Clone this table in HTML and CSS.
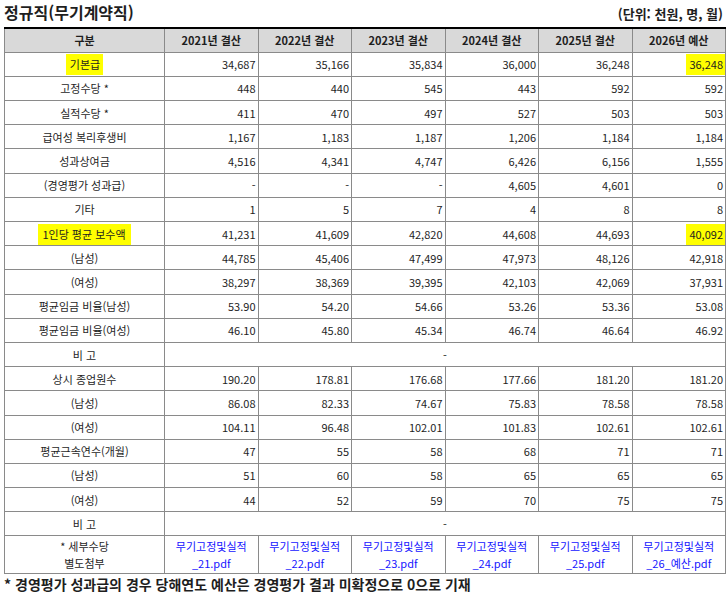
FILE: index.html
```html
<!DOCTYPE html>
<html lang="ko">
<head>
<meta charset="utf-8">
<title>정규직(무기계약직)</title>
<link rel="stylesheet" href="styles.css">
</head>
<body>
<div class="page">
  <div class="top">
    <h1 class="title">정규직(무기계약직)</h1>
    <div class="unit">(단위: 천원, 명, 월)</div>
  </div>
  <table class="grid">
    <colgroup>
      <col class="c-label">
      <col class="c-year"><col class="c-year"><col class="c-year">
      <col class="c-year"><col class="c-year"><col class="c-year">
    </colgroup>
    <thead>
      <tr>
        <th>구분</th>
        <th>2021년 결산</th>
        <th>2022년 결산</th>
        <th>2023년 결산</th>
        <th>2024년 결산</th>
        <th>2025년 결산</th>
        <th>2026년 예산</th>
      </tr>
    </thead>
    <tbody>
      <tr><td class="lb"><span class="hl hl-a">기본급</span></td><td>34,687</td><td>35,166</td><td>35,834</td><td>36,000</td><td>36,248</td><td><span class="hl hl-n">36,248</span></td></tr>
      <tr><td class="lb">고정수당 *</td><td>448</td><td>440</td><td>545</td><td>443</td><td>592</td><td>592</td></tr>
      <tr><td class="lb">실적수당 *</td><td>411</td><td>470</td><td>497</td><td>527</td><td>503</td><td>503</td></tr>
      <tr><td class="lb">급여성 복리후생비</td><td>1,167</td><td>1,183</td><td>1,187</td><td>1,206</td><td>1,184</td><td>1,184</td></tr>
      <tr><td class="lb">성과상여금</td><td>4,516</td><td>4,341</td><td>4,747</td><td>6,426</td><td>6,156</td><td>1,555</td></tr>
      <tr><td class="lb">(경영평가 성과급)</td><td>-</td><td>-</td><td>-</td><td>4,605</td><td>4,601</td><td>0</td></tr>
      <tr><td class="lb">기타</td><td>1</td><td>5</td><td>7</td><td>4</td><td>8</td><td>8</td></tr>
      <tr><td class="lb"><span class="hl hl-b">1인당 평균 보수액</span></td><td>41,231</td><td>41,609</td><td>42,820</td><td>44,608</td><td>44,693</td><td><span class="hl hl-n">40,092</span></td></tr>
      <tr><td class="lb">(남성)</td><td>44,785</td><td>45,406</td><td>47,499</td><td>47,973</td><td>48,126</td><td>42,918</td></tr>
      <tr><td class="lb">(여성)</td><td>38,297</td><td>38,369</td><td>39,395</td><td>42,103</td><td>42,069</td><td>37,931</td></tr>
      <tr><td class="lb">평균임금 비율(남성)</td><td>53.90</td><td>54.20</td><td>54.66</td><td>53.26</td><td>53.36</td><td>53.08</td></tr>
      <tr><td class="lb">평균임금 비율(여성)</td><td>46.10</td><td>45.80</td><td>45.34</td><td>46.74</td><td>46.64</td><td>46.92</td></tr>
      <tr><td class="lb">비 고</td><td class="merged" colspan="6">-</td></tr>
      <tr><td class="lb">상시 종업원수</td><td>190.20</td><td>178.81</td><td>176.68</td><td>177.66</td><td>181.20</td><td>181.20</td></tr>
      <tr><td class="lb">(남성)</td><td>86.08</td><td>82.33</td><td>74.67</td><td>75.83</td><td>78.58</td><td>78.58</td></tr>
      <tr><td class="lb">(여성)</td><td>104.11</td><td>96.48</td><td>102.01</td><td>101.83</td><td>102.61</td><td>102.61</td></tr>
      <tr><td class="lb">평균근속연수(개월)</td><td>47</td><td>55</td><td>58</td><td>68</td><td>71</td><td>71</td></tr>
      <tr><td class="lb">(남성)</td><td>51</td><td>60</td><td>58</td><td>65</td><td>65</td><td>65</td></tr>
      <tr><td class="lb">(여성)</td><td>44</td><td>52</td><td>59</td><td>70</td><td>75</td><td>75</td></tr>
      <tr><td class="lb">비 고</td><td class="merged" colspan="6">-</td></tr>
      <tr class="files">
        <td class="lb">* 세부수당<br>별도첨부</td>
        <td class="file"><a href="#">무기고정및실적<br>_21.pdf</a></td>
        <td class="file"><a href="#">무기고정및실적<br>_22.pdf</a></td>
        <td class="file"><a href="#">무기고정및실적<br>_23.pdf</a></td>
        <td class="file"><a href="#">무기고정및실적<br>_24.pdf</a></td>
        <td class="file"><a href="#">무기고정및실적<br>_25.pdf</a></td>
        <td class="file"><a href="#">무기고정및실적<br>_26_예산.pdf</a></td>
      </tr>
    </tbody>
  </table>
  <p class="note">* 경영평가 성과급의 경우 당해연도 예산은 경영평가 결과 미확정으로 0으로 기재</p>
</div>
</body>
</html>
```

FILE: styles.css
```css
* { box-sizing: border-box; }

html, body {
  margin: 0;
  padding: 0;
  background: #ffffff;
}

body {
  font-family: "Noto Sans CJK KR", "Noto Sans", sans-serif;
  color: #1e1e1e;
}

.page {
  width: 728px;
  padding: 0 3px 0 4px;
}

.top {
  height: 27px;
  display: flex;
  justify-content: space-between;
  align-items: flex-end;
  padding-bottom: 4px;
}

.title {
  margin: 0;
  font-size: 16px;
  font-weight: 700;
  line-height: 21px;
  color: #1e1e1e;
}

.unit {
  font-size: 13px;
  font-weight: 700;
  line-height: 18px;
  color: #1e1e1e;
  padding-right: 2px;
}

.grid {
  width: 721px;
  table-layout: fixed;
  border-collapse: collapse;
  border-top: 2px solid #000000;
  border-left: 1px solid #000000;
  border-right: 1px solid #000000;
  border-bottom: 1px solid #000000;
  font-size: 11px;
  line-height: 14px;
}

.c-label { width: 160px; }
.c-year { width: 93.5px; }

.grid tr { height: 24.2px; }

.grid th,
.grid td {
  border: 1px solid #8a8a8a;
  padding: 0 2px 0 2px;
  vertical-align: middle;
  white-space: nowrap;
}

.grid th {
  background: #d9d9d9;
  font-weight: 700;
  text-align: center;
  color: #1e1e1e;
}

.grid td {
  text-align: right;
}

.grid td.lb,
.grid td.merged,
.grid td.file {
  text-align: center;
}

.grid tr.files { height: 38px; }

.grid tr.files td { line-height: 17px; }

.file a {
  color: #1414ff;
  text-decoration: none;
}

.hl {
  background: #ffff00;
}

.hl-a {
  padding: 2px 3px 3px 4px;
}

.hl-b {
  padding: 2px 5px 3px 4px;
}

.hl-n {
  padding: 2px 0 3px 3px;
  margin-right: -2px;
  padding-right: 2px;
}

.note {
  margin: 0;
  font-size: 14px;
  font-weight: 700;
  line-height: 20px;
  color: #1e1e1e;
}
```
